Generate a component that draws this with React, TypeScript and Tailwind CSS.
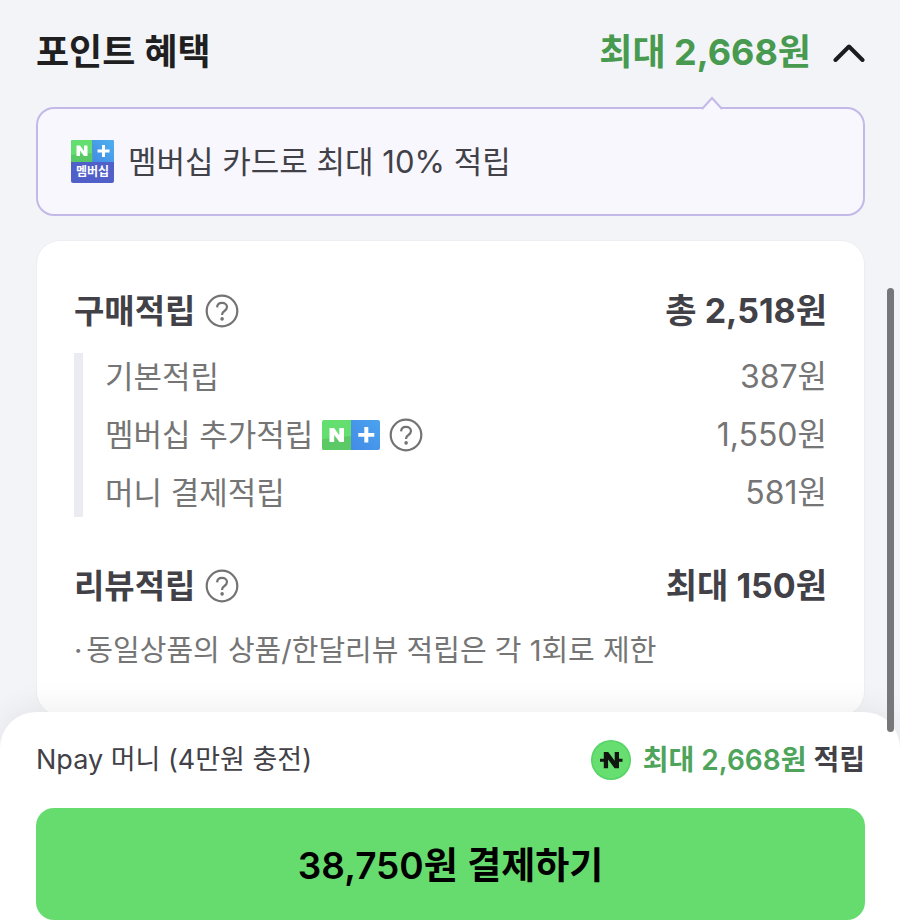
import { useState } from "react";

type Saving = {
  name: string;
  amount: string;
  membership?: boolean;
};

const savings: Saving[] = [
  { name: "기본적립", amount: "387원" },
  { name: "멤버십 추가적립", amount: "1,550원", membership: true },
  { name: "머니 결제적립", amount: "581원" },
];

function HelpButton({ label }: { label: string }) {
  return (
    <button type="button" aria-label={label} className="shrink-0 text-[#737373]">
      <svg className="size-[34px]" viewBox="0 0 34 34" fill="none" stroke="currentColor">
        <circle cx="17" cy="17" r="15.3" strokeWidth="2.2" />
        <path
          d="M12.1 13.4C12.2 10.6 14.100 8.900 17 8.900s5 1.700 5 4.200c0 2-1.200 2.900-2.600 3.900-1.500 1-2.300 1.700-2.300 3.600v.5"
          strokeWidth="2.2"
        />
        <circle cx="17.1" cy="24.9" r="1.8" fill="currentColor" stroke="none" />
      </svg>
    </button>
  );
}

function PlusBadge() {
  return (
    <svg className="h-[30px] w-[58px] shrink-0" viewBox="0 0 58 30" aria-label="네이버플러스">
      <defs>
        <linearGradient id="plusBlue" x1="0" y1="1" x2="1" y2="0">
          <stop offset="0" stopColor="#438be6" />
          <stop offset="1" stopColor="#4aa3ee" />
        </linearGradient>
        <clipPath id="plusClip">
          <rect width="58" height="30" rx="2" />
        </clipPath>
      </defs>
      <g clipPath="url(#plusClip)">
        <rect width="29" height="30" fill="#65de70" />
        <path d="M0 19 29 16V30H0z" fill="#5bc966" />
        <rect x="29" width="29" height="30" fill="url(#plusBlue)" />
        <path d="M7.500 8h4.600l5.200 7.200V8H22v14h-4.600l-5.200-7.200V22H7.500z" fill="#fff" />
        <path d="M42.300 7h4v6h6v3.700h-6V22.500h-4v-5.800h-6V13h6z" fill="#fff" />
      </g>
    </svg>
  );
}

function MembershipBadge() {
  return (
    <div className="flex size-[43px] shrink-0 flex-col overflow-hidden rounded-xs bg-[#5060c8]">
      <svg className="h-[22px] w-[43px]" viewBox="0 0 43 22" aria-hidden="true">
        <defs>
          <linearGradient id="memberBlue" x1="0" y1="1" x2="1" y2="0">
            <stop offset="0" stopColor="#438be6" />
            <stop offset="1" stopColor="#4eb0ee" />
          </linearGradient>
        </defs>
        <rect width="21.500" height="22" fill="#65de70" />
        <path d="M0 15 21.500 13V22H0z" fill="#58c766" />
        <rect x="21.500" width="21.500" height="22" fill="url(#memberBlue)" />
        <path d="M5.500 5.500H9l4 5.600V5.500h3.500V16H13l-4-5.600V16H5.500z" fill="#fff" />
        <path d="M31 5h3v4.500h4.500v3H34V17h-3v-4.500h-4.500v-3H31z" fill="#fff" />
      </svg>
      <span className="text-center text-[12px] leading-[20px] font-semibold text-white">
        멤버십
      </span>
    </div>
  );
}

function NpayCoin() {
  return (
    <svg className="size-10 shrink-0" viewBox="0 0 40 40" aria-hidden="true">
      <circle cx="20" cy="20" r="20" fill="#55d365" />
      <circle cx="20" cy="20" r="18.500" fill="#66df70" />
      <path
        d="M12.800 12h4.400l6.500 8.800V12H28v6.800h3.500v3H28V28.200h-4.400l-6.500-8.800v8.800h-4.300v-6.400H9v-3h3.800z"
        fill="#101510"
      />
    </svg>
  );
}

export default function App() {
  const [open, setOpen] = useState(true);

  return (
    <div className="relative flex min-h-screen flex-col bg-[#f3f4f7] font-[Inter,'Noto_Sans_CJK_KR',sans-serif] text-[#414147]">
      <main className="flex-1 pt-7 pr-[35px] pl-9">
        <div className="flex h-12 items-center justify-between">
          <h1 className="text-[36px] leading-[48px] font-semibold text-[#1f1f22]">포인트 혜택</h1>
          <button
            type="button"
            aria-expanded={open}
            onClick={() => setOpen(!open)}
            className="flex items-center gap-[22px] text-[36px] leading-[48px] font-bold text-[#479a50]"
          >
            최대 2,668원
            <svg
              className={open ? "h-5 w-8" : "h-5 w-8 rotate-180"}
              viewBox="0 0 32 20"
              fill="none"
              stroke="#1c1c1f"
              strokeWidth="4"
              strokeLinecap="round"
              strokeLinejoin="round"
            >
              <path d="M2.500 18 16 4.500 29.500 18" />
            </svg>
          </button>
        </div>

        {open && (
          <>
            <section className="relative mt-[31px] flex h-[109px] items-center gap-[14px] rounded-[18px] border-2 border-[#c3b9e9] bg-[#f8f7fd] px-[33px]">
              <svg
                className="absolute -top-[13px] right-[140px] h-[14px] w-[22px]"
                viewBox="0 0 22 14"
                aria-hidden="true"
              >
                <path d="M1 13 11 2l10 11v1H1z" fill="#f8f7fd" />
                <path d="M1 13 11 2l10 11" fill="none" stroke="#c3b9e9" strokeWidth="2" />
              </svg>
              <MembershipBadge />
              <p className="text-[31px] leading-[40px]">멤버십 카드로 최대 10% 적립</p>
            </section>

            <section className="mt-6 rounded-3xl border border-[#eceef2] bg-white px-[37px] pt-[46px] pb-11">
              <div className="flex h-12 items-center justify-between leading-[48px] font-bold">
                <div className="flex items-center gap-[10px]">
                  <h2 className="text-[33px]">구매적립</h2>
                  <HelpButton label="구매적립 안내" />
                </div>
                <span className="text-[34px]">총 2,518원</span>
              </div>

              <ul className="mt-[18px] flex h-[164px] flex-col justify-between border-l-9 border-[#ebecf2] pl-[22px] leading-[48px] text-[#757575]">
                {savings.map((saving) => (
                  <li key={saving.name} className="flex items-center justify-between">
                    <div className="flex items-center gap-[9px]">
                      <span className="text-[31px]">{saving.name}</span>
                      {saving.membership && (
                        <>
                          <PlusBadge />
                          <HelpButton label="멤버십 추가적립 안내" />
                        </>
                      )}
                    </div>
                    <span className="text-[32px]">{saving.amount}</span>
                  </li>
                ))}
              </ul>

              <div className="mt-[45px] flex h-12 items-center justify-between leading-[48px] font-bold">
                <div className="flex items-center gap-[10px]">
                  <h2 className="text-[33px]">리뷰적립</h2>
                  <HelpButton label="리뷰적립 안내" />
                </div>
                <span className="text-[34px]">최대 150원</span>
              </div>
              <p className="mt-[21px] flex gap-1 text-[29px] leading-[40px] text-[#757575]">
                <span>·</span>
                <span>동일상품의 상품/한달리뷰 적립은 각 1회로 제한</span>
              </p>
            </section>
          </>
        )}
      </main>

      <footer className="relative -mt-1 rounded-t-[36px] bg-white pt-7 pr-[35px] pl-9 shadow-[0_-4px_32px_rgba(0,0,0,0.07)]">
        <div className="flex h-10 items-center justify-between leading-[40px]">
          <span className="text-[27px]">Npay 머니 (4만원 충전)</span>
          <div className="flex items-center gap-3 text-[28px] font-semibold">
            <NpayCoin />
            <p>
              <span className="text-[#4da45a]">최대 2,668원</span> 적립
            </p>
          </div>
        </div>
        <button
          type="button"
          className="mt-7 h-28 w-full rounded-[18px] bg-[#67dc6e] pt-1 text-[37px] font-semibold text-black"
        >
          38,750원 결제하기
        </button>
      </footer>

      {/* scroll position */}
      <div className="pointer-events-none absolute top-72 right-[6px] h-[444px] w-[7px] rounded-full bg-[#777779]" />
    </div>
  );
}
